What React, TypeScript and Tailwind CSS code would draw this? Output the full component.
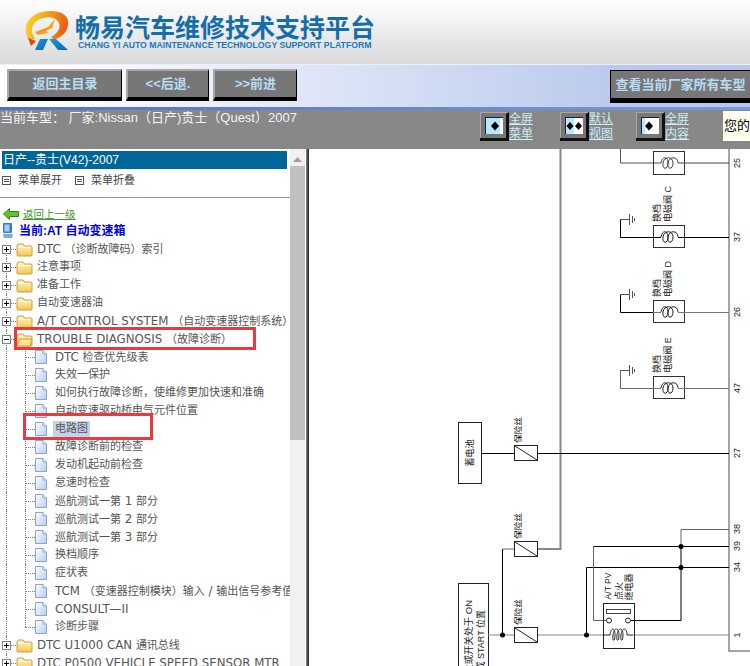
import React from "react";

const CJK = "font-['Liberation_Sans','Noto_Sans_CJK_SC',sans-serif]";

type Row = { t: string; kind: "plus" | "minus" | "doc"; last?: boolean; sel?: boolean };

const rows: Row[] = [
  { t: "DTC （诊断故障码）索引", kind: "plus" },
  { t: "注意事项", kind: "plus" },
  { t: "准备工作", kind: "plus" },
  { t: "自动变速器油", kind: "plus" },
  { t: "A/T CONTROL SYSTEM （自动变速器控制系统）", kind: "plus" },
  { t: "TROUBLE DIAGNOSIS （故障诊断）", kind: "minus" },
  { t: "DTC 检查优先级表", kind: "doc" },
  { t: "失效一保护", kind: "doc" },
  { t: "如何执行故障诊断，使维修更加快速和准确", kind: "doc" },
  { t: "自动变速驱动桥电气元件位置", kind: "doc" },
  { t: "电路图", kind: "doc", sel: true },
  { t: "故障诊断前的检查", kind: "doc" },
  { t: "发动机起动前检查", kind: "doc" },
  { t: "怠速时检查", kind: "doc" },
  { t: "巡航测试一第 1 部分", kind: "doc" },
  { t: "巡航测试一第 2 部分", kind: "doc" },
  { t: "巡航测试一第 3 部分", kind: "doc" },
  { t: "换档顺序", kind: "doc" },
  { t: "症状表", kind: "doc" },
  { t: "TCM （变速器控制模块）输入 / 输出信号参考值", kind: "doc" },
  { t: "CONSULT—II", kind: "doc" },
  { t: "诊断步骤", kind: "doc", last: true },
  { t: "DTC U1000 CAN 通讯总线", kind: "plus" },
  { t: "DTC P0500 VEHICLE SPEED SENSOR MTR （车速传感器）", kind: "plus" },
];

function Mixed({ t }: { t: string }) {
  const parts = t.match(/[A-Za-z0-9/ —]+|[^A-Za-z0-9/ —]+/g) ?? [];
  return (
    <>
      {parts.map((p, i) =>
        /^[A-Za-z0-9/ —]+$/.test(p) ? (
          <span key={i} className="text-[11.800px]">{p}</span>
        ) : (
          <span key={i}>{p}</span>
        ),
      )}
    </>
  );
}

function Folder({ open }: { open?: boolean }) {
  return (
    <svg width="17" height="15" viewBox="0 0 17 15" className="shrink-0">
      <defs>
        <linearGradient id="fg" x1="0" y1="0" x2="0" y2="1">
          <stop offset="0" stopColor="#fff8c8" />
          <stop offset="1" stopColor="#f0c850" />
        </linearGradient>
      </defs>
      <path d="M1 4 L2 2 H7 L8.500 4 H15 Q16 4 16 5 V13 Q16 14 15 14 H2 Q1 14 1 13 Z" fill="url(#fg)" stroke="#c8a040" strokeWidth="1" />
      {open ? <path d="M1 13 L4 7 H16 L14 14 H2 Z" fill="#fbe48c" stroke="#c8a040" /> : <path d="M2 5.500 H15" stroke="#fffbe0" />}
    </svg>
  );
}

function Doc() {
  return (
    <svg width="12" height="14" viewBox="0 0 12 14" className="shrink-0">
      <defs>
        <linearGradient id="dg" x1="0" y1="0" x2="1" y2="1">
          <stop offset="0" stopColor="#ffffff" />
          <stop offset="1" stopColor="#b8cdf0" />
        </linearGradient>
      </defs>
      <path d="M0.500 0.500 H8 L11.500 4 V13.500 H0.500 Z" fill="url(#dg)" stroke="#8aa4cc" />
      <path d="M8 0.500 V4 H11.500" fill="#e8f0fc" stroke="#8aa4cc" />
    </svg>
  );
}

function PlusBox({ minus }: { minus?: boolean }) {
  return (
    <svg width="9" height="9" viewBox="0 0 9 9" className="shrink-0 block">
      <rect x="0.500" y="0.500" width="8" height="8" fill="#fff" stroke="#808080" />
      <path d={minus ? "M2 4.500 H7" : "M2 4.500 H7 M4.500 2 V7"} stroke="#000" />
    </svg>
  );
}

function TreeRow({ r, first }: { r: Row; first: boolean }) {
  const isDoc = r.kind === "doc";
  return (
    <div className="relative h-[18px] flex items-center whitespace-nowrap overflow-hidden">
      <span className={`absolute left-[6px] bottom-0 border-l border-dotted border-[#808080] ${first ? "top-[9px]" : "top-0"}`} />
      {isDoc ? (
        <>
          <span className={`absolute left-[25px] top-0 border-l border-dotted border-[#808080] ${r.last ? "h-[9px]" : "h-[18px]"}`} />
          <span className="absolute left-[25px] w-[10px] top-[9px] border-t border-dotted border-[#808080]" />
          <span className="ml-[35px]"><Doc /></span>
          <span className={`ml-[6px] px-[2px] text-[11px] leading-[16px] text-[#555] ${r.sel ? "bg-[#c3d3ea]" : ""}`}><Mixed t={r.t} /></span>
        </>
      ) : (
        <>
          <span className="absolute left-[11px] w-[5px] top-[9px] border-t border-dotted border-[#808080]" />
          <span className="ml-[2px] relative"><PlusBox minus={r.kind === "minus"} /></span>
          <span className="ml-[5px]"><Folder open={r.kind === "minus"} /></span>
          <span className="ml-[4px] text-[11px] leading-[16px] text-[#555]"><Mixed t={r.t} /></span>
        </>
      )}
    </div>
  );
}

function NavBtn({ w, label }: { w: string; label: string }) {
  return (
    <div className={`${w} h-[32px] flex items-center justify-center bg-[#777] border-l-[2px] border-t-[2px] border-l-[#a8a8a8] border-t-[#a8a8a8] border-b-[4px] border-r-[1px] border-b-black border-r-black text-[13px] font-bold text-[#b8dcf4] whitespace-nowrap`}>
      {label}
    </div>
  );
}

function ViewIcon({ mode }: { mode: "menu" | "both" | "content" }) {
  return (
    <svg width="29" height="29" viewBox="0 0 29 29" className="shrink-0">
      <rect width="29" height="29" fill="#777" />
      <path d="M0 0 H29 V1 H1 V29 H0 Z" fill="#a8a8a8" />
      <path d="M29 29 H0 V26 H2 L2 26 H26 V2 L29 0 Z" fill="#111" />
      <rect x="5" y="5" width="18" height="17" fill="#222" />
      {mode === "menu" && (
        <>
          <rect x="6" y="6" width="17" height="16" fill="#b8e8fc" />
          <rect x="20" y="6" width="3" height="16" fill="#fff" />
          <path d="M15 9.500 L19 14 L15 18.500 L11 14 Z" fill="#000" />
        </>
      )}
      {mode === "both" && (
        <>
          <rect x="6" y="6" width="8" height="16" fill="#b8e8fc" />
          <rect x="14" y="6" width="9" height="16" fill="#fff" />
          <path d="M10 10 L13.500 14 L10 18 L6.500 14 Z M18.500 10 L22 14 L18.500 18 L15 14 Z" fill="#000" />
        </>
      )}
      {mode === "content" && (
        <>
          <rect x="6" y="6" width="17" height="16" fill="#fff" />
          <rect x="6" y="6" width="3" height="16" fill="#b8e8fc" />
          <path d="M13 9.500 L17 14 L13 18.500 L9 14 Z" fill="#000" />
        </>
      )}
    </svg>
  );
}

function ViewLink({ a, b }: { a: string; b: string }) {
  return (
    <div className="text-[12px] leading-[15px] text-[#c8ecf8] underline">
      <div>{a}</div>
      <div>{b}</div>
    </div>
  );
}

function Logo() {
  return (
    <svg width="46" height="42" viewBox="0 0 46 42" className="shrink-0">
      <defs>
        <linearGradient id="lo" x1="0" y1="0.300" x2="1" y2="0.500">
          <stop offset="0" stopColor="#f8d828" />
          <stop offset="0.600" stopColor="#f09018" />
          <stop offset="1" stopColor="#e85a10" />
        </linearGradient>
        <linearGradient id="lb" x1="0" y1="0" x2="1" y2="1">
          <stop offset="0" stopColor="#18a0e0" />
          <stop offset="1" stopColor="#1060b0" />
        </linearGradient>
      </defs>
      <path d="M7 31 C-3 22 1 6 18 2 C32 -1 46 3 44 15 C43 23 37 27 30 30 L27 27 C33 24 37 19 35 13 C33 7 23 5 14 10 C7 14 6 23 11 28 Z" fill="url(#lo)" />
      <path d="M3 27 L11 33 L8 34 L7 33 Z M4 28 L12 31 L7 36 Z" fill="#d84a10" />
      <path d="M11 22 L24 17 L31 9 L28 18 L22 21 L24 23 L14 25 Z" fill="#f4a018" />
      <path d="M11 40 L16 29 H24 L19 40 Z" fill="url(#lb)" />
      <path d="M25 29 H32 L44 40 H34 Z" fill="url(#lb)" />
    </svg>
  );
}

function Txt({ x, y, s, size = 9, c = "#222", anchor = "middle" }: { x: number; y: number; s: string; size?: number; c?: string; anchor?: "middle" | "end" }) {
  return (
    <text x={x} y={y} transform={`rotate(-90 ${x} ${y})`} fontSize={size} fill={c} textAnchor={anchor} fontFamily="'Liberation Sans','Noto Sans CJK SC',sans-serif">
      {s}
    </text>
  );
}

function Valve({ y, n, label, sub, dark }: { y: number; n: string; label: string; sub: string; dark: boolean }) {
  return (
    <g fill="none">
      <path d={`M620.500 ${y - 18} V${y + 0.5} H653`} stroke={dark ? "#000" : "#666"} />
      <path d={`M620 ${y - 17.500} H629`} stroke="#555" />
      <path d={`M629.500 ${y - 23} V${y - 12} M632.500 ${y - 21} V${y - 14} M634.500 ${y - 19} V${y - 16}`} stroke="#555" />
      <rect x="653.500" y={y - 11.500} width="31" height="22" stroke="#333" />
      <path d={`M653 ${y + 0.5} H661 M678 ${y + 0.5} H729`} stroke={n === "37" ? "#000" : "#777"} />
      <path d={`M661 ${y} C662 ${y - 7} 668 ${y - 7} 668 ${y} C668 ${y + 7} 662 ${y + 7} 663 ${y} C664 ${y - 7} 673 ${y - 7} 673 ${y} C673 ${y + 7} 667 ${y + 7} 668 ${y} C669 ${y - 7} 678 ${y - 7} 678 ${y}`} stroke="#222" />
      <Txt x={660} y={y - 24} s={label} />
      <Txt x={671} y={y - 33} s={sub} />
      <Txt x={740} y={y} s={n} />
    </g>
  );
}

function Fuse({ y }: { y: number }) {
  return (
    <g fill="none">
      <rect x="514.500" y={y - 7.500} width="23" height="15" fill="#fff" stroke="#222" />
      <path d={`M515 ${y - 7} L537 ${y + 7}`} stroke="#222" />
      <Txt x={521} y={y - 23} s="保险丝" size={8.500} c="#000" />
    </g>
  );
}

function Diagram() {
  return (
    <svg width="441" height="517" viewBox="309 149 441 517" className="block">
      <rect x="309" y="149" width="441" height="517" fill="#fff" />
      <g fill="none">
        <path d="M560.500 149 V549 H537" stroke="#888" strokeWidth="2" />
        <path d="M729 149 V651 H750" stroke="#888" strokeWidth="1.500" />
        <path d="M620.500 149 V163 H653 M653 163 H661" stroke="#555" />
        <rect x="653.500" y="151.500" width="31" height="23" stroke="#333" />
        <path d="M661 163 C662 156 668 156 668 163 C668 170 662 170 663 163 C664 156 673 156 673 163 C673 170 667 170 668 163 C669 156 678 156 678 163 M678 163 H729" stroke="#444" />
      </g>
      <Txt x={740} y={163} s="25" />
      <Valve y={237} n="37" label="换档" sub="电磁阀 C" dark />
      <Valve y={312} n="26" label="换档" sub="电磁阀 D" dark />
      <Valve y={388} n="47" label="换档" sub="电磁阀 E" dark={false} />

      <g fill="none">
        <rect x="458.500" y="422.500" width="23" height="61" stroke="#222" />
        <path d="M481 453.500 H514 M537 453.500 H729" stroke="#000" />
        <rect x="458.500" y="583.500" width="30" height="100" stroke="#222" />
        <path d="M502.500 549 H514" stroke="#666" />
        <path d="M502.500 549 V635" stroke="#000" />
        <path d="M488 635 H514 M537 635 H604 M633 635 H729" stroke="#888" />
        <path d="M586.500 635 V567.500 H729" stroke="#000" />
        <path d="M593 546.500 H729" stroke="#000" />
        <path d="M681 529.500 H729 M681 529.500 V546" stroke="#666" />
        <path d="M593.500 546 V620.500 H606" stroke="#666" />
        <path d="M631 620.500 H681 V546" stroke="#000" />
        <rect x="603.500" y="603.500" width="31" height="45" stroke="#222" />
        <rect x="606.500" y="609.500" width="24" height="4" stroke="#444" />
        <circle cx="609" cy="620.500" r="2.500" stroke="#222" />
        <circle cx="628" cy="620.500" r="2.500" stroke="#222" />
        <path d="M604 635 H610 C611 627 615 627 615 635 C615 642 612 642 613 635 C614 627 619 627 619 635 C619 642 616 642 617 635 C618 627 623 627 623 635 C623 642 620 642 621 635 C622 627 627 627 627 635 H633" stroke="#222" />
      </g>
      <Fuse y={453} />
      <Fuse y={549} />
      <Fuse y={635} />
      <g fill="#000">
        <circle cx="502.500" cy="635" r="2.500" />
        <circle cx="586.500" cy="635" r="2.500" />
        <circle cx="681" cy="546.500" r="2.500" />
        <circle cx="681" cy="567.500" r="2.500" />
      </g>
      <Txt x={473} y={453} s="蓄电池" size={9} />
      <Txt x={472} y={600} s="点火或开关处于 ON" size={9.500} anchor="end" />
      <Txt x={484} y={610} s="或 START 位置" size={9} anchor="end" />
      <Txt x={611} y={586} s="A/T PV" size={8.500} />
      <Txt x={622} y={591} s="点火" size={9} />
      <Txt x={632} y={587} s="继电器" size={9} />
      <Txt x={740} y={453} s="27" />
      <Txt x={740} y={529} s="38" />
      <Txt x={740} y={546} s="39" />
      <Txt x={740} y={567} s="34" />
      <Txt x={740} y={635} s="1" />
    </svg>
  );
}

function MenuGlyph() {
  return (
    <span className="w-[9px] h-[9px] border border-[#555] flex flex-col justify-center items-center gap-[1px] shrink-0">
      <i className="w-[5px] h-px bg-[#555]" />
      <i className="w-[5px] h-px bg-[#555]" />
    </span>
  );
}

export default function App() {
  return (
    <div className={`w-[750px] h-[666px] overflow-hidden flex flex-col bg-white ${CJK}`}>
      <header className="h-[64px] shrink-0 flex items-center pl-[24px] pb-[2px] bg-gradient-to-b from-white to-[#d9d9d9] gap-[5px]">
        <Logo />
        <div className="flex flex-col">
          <div className="text-[25px] leading-[28px] font-bold text-[#146eaa] font-['Noto_Sans_CJK_SC',sans-serif] whitespace-nowrap">畅易汽车维修技术支持平台</div>
          <div className="text-[8.700px] leading-[11px] font-bold text-[#1c78b8] whitespace-nowrap ml-[3px]">CHANG YI AUTO MAINTENANCE TECHNOLOGY SUPPORT PLATFORM</div>
        </div>
      </header>

      <nav className="h-[43px] shrink-0 flex items-start pt-[4px] pl-[7px] gap-[4px] bg-gradient-to-r from-white from-[5%] to-[#b8c8ec] to-[85%] border-t border-t-[#eef]">
        <NavBtn w="w-[115px]" label="返回主目录" />
        <NavBtn w="w-[83px]" label="<<后退." />
        <NavBtn w="w-[84px]" label=">>前进" />
        <div className="ml-auto mt-[1px] w-[140px] h-[33px] flex items-center justify-center bg-[#777] border-l border-t border-l-black border-t-black border-b-[5px] border-b-black text-[13px] font-bold text-[#b8dcf4] whitespace-nowrap">
          查看当前厂家所有车型
        </div>
      </nav>
      <div className="h-[3px] shrink-0 bg-gradient-to-r from-[#5570c0] to-[#7a9ae0]" />

      <div className="h-[39px] shrink-0 bg-[#888] relative flex items-start">
        <div className="text-[13px] leading-[16px] text-[#f4f4f4] whitespace-nowrap">当前车型： 厂家:Nissan（日产)贵士（Quest）2007</div>
        <div className="absolute left-[480px] top-[2px] flex items-start">
          <div className="flex w-[80px]">
            <ViewIcon mode="menu" />
            <ViewLink a="全屏" b="菜单" />
          </div>
          <div className="flex w-[76px]">
            <ViewIcon mode="both" />
            <ViewLink a="默认" b="视图" />
          </div>
          <div className="flex">
            <ViewIcon mode="content" />
            <ViewLink a="全屏" b="内容" />
          </div>
        </div>
        <div className="absolute left-[723px] top-[1px] w-[27px] h-[30px] bg-[#fffff0] flex items-center overflow-hidden whitespace-nowrap text-[13px] text-black pl-[1px]">您的</div>
      </div>

      <main className="flex-1 flex min-h-0">
        <aside className="w-[306px] shrink-0 flex relative overflow-hidden">
          <div className="w-[290px] shrink-0 overflow-hidden pt-[2px]">
            <div className="ml-[2px] w-[285px] h-[18px] bg-[#006699] text-white text-[12px] leading-[18px] pl-[1px]">日产--贵士(V42)-2007</div>
            <div className="h-[22px] flex items-center text-[11px] text-[#444] pl-[2px]">
              <MenuGlyph />
              <span className="ml-[7px]">菜单展开</span>
              <span className="ml-[13px]"><MenuGlyph /></span>
              <span className="ml-[7px]">菜单折叠</span>
            </div>
            <div className="mt-[6px] border-t border-t-[#999] h-px" />
            <div className="h-[24px] flex items-end pl-[3px]">
              <svg width="16" height="12" viewBox="0 0 16 12" className="mb-[2px] shrink-0">
                <path d="M0.500 6 L6.500 0.500 V3.500 H15.500 V8.500 H6.500 V11.500 Z" fill="#5cc42c" stroke="#2c8a10" />
              </svg>
              <span className="ml-[4px] text-[10.500px] leading-[16px] text-[#3a9a20] underline">返回上一级</span>
            </div>
            <div className="h-[18px] flex items-center pl-[2px]">
              <svg width="12" height="16" viewBox="0 0 12 16" className="shrink-0">
                <rect x="1" y="0" width="9" height="10" rx="1" fill="#3a78c8" />
                <rect x="2.500" y="1.500" width="5" height="7" fill="#a8d0f4" />
                <path d="M1 11 H11 L10 15 H2 Z" fill="#7fa8dc" />
              </svg>
              <span className="ml-[5px] text-[12px] font-bold text-[#0000ee] whitespace-nowrap">当前:AT 自动变速箱</span>
            </div>
            <div className="font-['DejaVu_Sans','Noto_Sans_CJK_SC',sans-serif]">
              {rows.map((r, i) => (
                <TreeRow key={i} r={r} first={i === 0} />
              ))}
            </div>
          </div>

          <div className="w-[15px] shrink-0 bg-[#f1f1f1] flex flex-col">
            <div className="h-[16px] mt-[2px] flex items-center justify-center">
              <svg width="9" height="5" viewBox="0 0 9 5"><path d="M0 5 L4.500 0 L9 5 Z" fill="#a0a0a0" /></svg>
            </div>
            <div className="h-[274px] bg-[#c0c0c0] mt-[-1px]" />
          </div>
          <div className="w-px bg-white" />

          <div className="absolute left-[14px] top-[178px] w-[242px] h-[23px] border-[3px] border-[#e83a3f]" />
          <div className="absolute left-[23px] top-[264px] w-[130px] h-[27px] border-[3px] border-[#e83a3f]" />
        </aside>
        <div className="w-[3px] shrink-0 bg-gradient-to-r from-[#888] to-[#222]" />
        <section className="flex-1 min-w-0 overflow-hidden">
          <Diagram />
        </section>
      </main>
    </div>
  );
}
